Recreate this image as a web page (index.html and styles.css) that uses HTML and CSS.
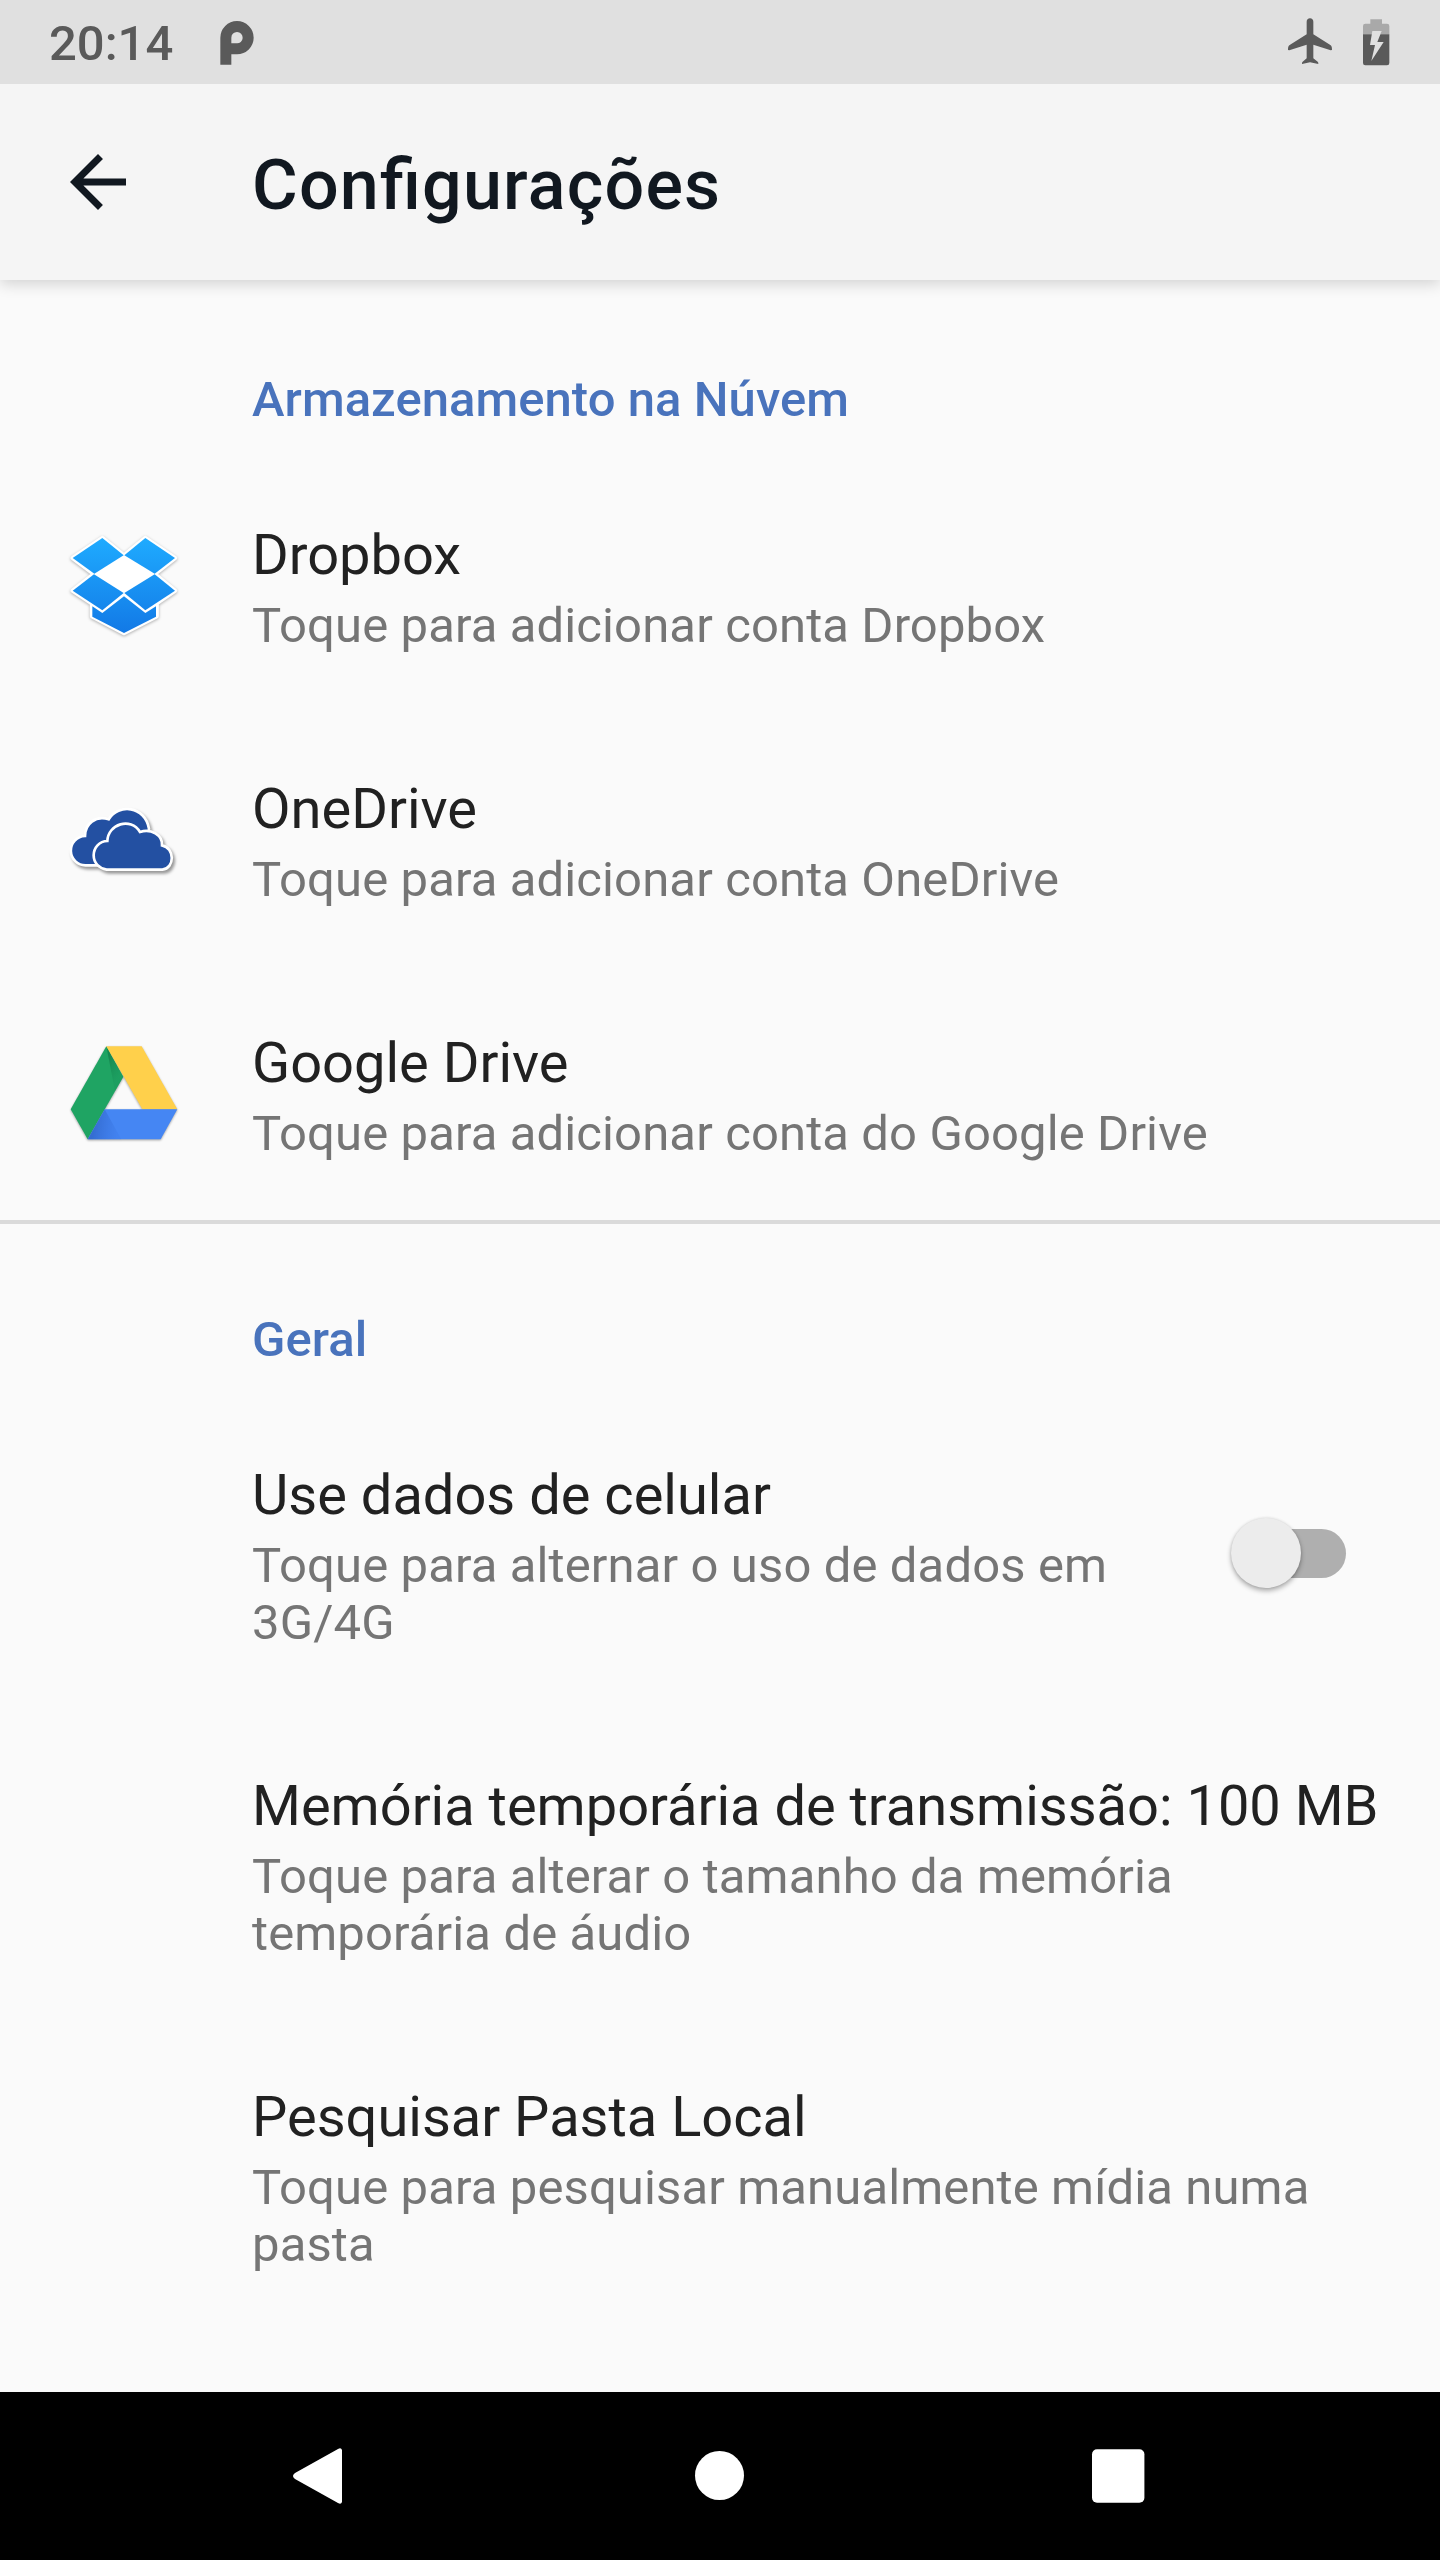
FILE: index.html
```html
<!DOCTYPE html>
<html lang="pt">
<head>
<meta charset="utf-8">
<title>Configurações</title>
<link rel="stylesheet" href="styles.css">
</head>
<body>
<div class="screen">
  <div class="status-bar">
    <span class="clock">20:14</span>
    <svg class="carrier-icon" viewBox="0 0 102 132"><path fill-rule="evenodd" d="M1 131V50a50 50 0 1 1 50 50H34v31zM34 67h16a17 17 0 1 0-16-17z"/></svg>
    <svg class="system-icons" viewBox="0 0 324 150">
      <path d="M66 4c6 0 10 4 10 10v38l51 32c4 3 5 6 5 15l-4 1-52-17v41l13 10c2 2 2 4 2 7l-25-5-24 5c0-3 0-5 2-7l12-10V83L4 100l-4-1c0-9 1-12 5-15l51-32V14c0-6 4-10 10-10z"/>
      <path class="battery-empty" d="M247 7h35v13h15q7 0 7 7v25h-79V27q0-7 7-7h15z"/>
      <path d="M225 52h79v86q0 7-7 7h-65q-7 0-7-7z"/>
      <path class="battery-bolt" d="M253 42h28l-13 33h19l-37 57 11-48h-15z"/>
    </svg>
  </div>

  <header class="app-bar">
    <svg class="back-icon" viewBox="0 0 24 24"><path d="M20 11H7.83l5.59-5.59L12 4l-8 8 8 8 1.41-1.41L7.83 13H20z"/></svg>
    <h1 class="app-title">Configurações</h1>
  </header>

  <main class="content">
    <section class="group">
      <h2 class="group-title">Armazenamento na Núvem</h2>
      <div class="row">
        <div class="row-icon">
          <svg class="service-icon" viewBox="0 0 390 390">
            <defs>
              <linearGradient id="boxBlue" gradientUnits="userSpaceOnUse" x1="0" y1="54" x2="0" y2="340"><stop offset="0" stop-color="#1fabff"/><stop offset="1" stop-color="#1279e6"/></linearGradient>
            </defs>
            <g class="icon-shadow">
              <path fill="#fff" stroke="#fff" stroke-width="13" stroke-linejoin="round" d="M127 54l65 52 64-52 89 60-61 48 61 50-55 38v39l-98 50-96-50v-39l-58-38 64-50-64-48z"/>
            </g>
            <g fill="url(#boxBlue)">
              <path d="M127 54l64 52-88 55-65-47z"/>
              <path d="M256 54l89 60-61 47-91-55z"/>
              <path d="M102 163l89 56-64 52-89-59z"/>
              <path d="M284 163l61 49-89 59-63-52z"/>
              <path d="M192 229l64 50 32-20v31l-96 49-95-49v-31l30 20z"/>
            </g>
          </svg>
        </div>
        <div class="row-text">
          <div class="row-title">Dropbox</div>
          <div class="row-summary">Toque para adicionar conta Dropbox</div>
        </div>
      </div>
      <div class="row">
        <div class="row-icon">
          <svg class="service-icon" viewBox="0 -48 390 390">
            <g class="cloud-shadow" fill="#2350a2" stroke="#fff" stroke-width="8">
              <path d="M78 226a42 42 0 0 1-3-88c0-35 31-63 71-50 29-48 109-41 121 28l-20 110z"/>
              <path d="M140 239c-23-4-39-20-39-43s17-43 41-43c2-51 70-73 98-27 33-11 68 9 66 40 39 7 39 69 1 73z"/>
            </g>
          </svg>
        </div>
        <div class="row-text">
          <div class="row-title">OneDrive</div>
          <div class="row-summary">Toque para adicionar conta OneDrive</div>
        </div>
      </div>
      <div class="row">
        <div class="row-icon">
          <svg class="service-icon" viewBox="0 -6 390 390">
            <defs>
              <linearGradient id="greenFold" gradientUnits="userSpaceOnUse" x1="140" y1="90" x2="188" y2="120"><stop offset="0" stop-color="#0c6b3d" stop-opacity=".5"/><stop offset="1" stop-color="#17935a" stop-opacity=".3"/></linearGradient>
              <linearGradient id="blueFold" gradientUnits="userSpaceOnUse" x1="100" y1="290" x2="175" y2="300"><stop offset="0" stop-color="#2b5fc0" stop-opacity=".65"/><stop offset="1" stop-color="#3b78e7" stop-opacity=".3"/></linearGradient>
            </defs>
            <g class="drive-shadow">
              <path fill="#1fa463" d="M139 49l51 91L83 328l-51-90z"/>
              <path fill="url(#greenFold)" d="M139 49l51 91-25 44z"/>
              <path fill="#ffd04b" d="M139 49h106l107 189H247z"/>
              <path fill="#4586f3" d="M134 238h218l-50 90H83z"/>
              <path fill="url(#blueFold)" d="M134 238l50 90H83z"/>
            </g>
          </svg>
        </div>
        <div class="row-text">
          <div class="row-title">Google Drive</div>
          <div class="row-summary">Toque para adicionar conta do Google Drive</div>
        </div>
      </div>
    </section>

    <section class="group divided">
      <h2 class="group-title">Geral</h2>
      <div class="row">
        <div class="row-icon"></div>
        <div class="row-text">
          <div class="row-title">Use dados de celular</div>
          <div class="row-summary">Toque para alternar o uso de dados em 3G/4G</div>
        </div>
        <div class="switch"><span class="switch-thumb"></span></div>
      </div>
      <div class="row">
        <div class="row-icon"></div>
        <div class="row-text">
          <div class="row-title">Memória temporária de transmissão: 100 MB</div>
          <div class="row-summary">Toque para alterar o tamanho da memória temporária de áudio</div>
        </div>
      </div>
      <div class="row">
        <div class="row-icon"></div>
        <div class="row-text">
          <div class="row-title">Pesquisar Pasta Local</div>
          <div class="row-summary">Toque para pesquisar manualmente mídia numa pasta</div>
        </div>
      </div>
    </section>
  </main>

  <nav class="nav-bar">
    <svg class="nav-icon" viewBox="0 0 60 60"><path d="M52 4v52q-1 3-4 1L5 33q-4-3 0-6L48 3q3-2 4 1z"/></svg>
    <svg class="nav-icon" viewBox="0 0 60 60"><circle cx="30.5" cy="29.5" r="24.5"/></svg>
    <svg class="nav-icon" viewBox="0 0 60 60"><rect x="4" y="3.3" width="52.4" height="53.4" rx="5"/></svg>
  </nav>
</div>
</body>
</html>
```
FILE: styles.css
```css
* {
  box-sizing: border-box;
}

body {
  margin: 0;
  background: #fafafa;
  font-family: Roboto, "Liberation Sans", sans-serif;
}

h1,
h2 {
  margin: 0;
  font-weight: 500;
}

svg {
  display: block;
  flex: none;
}

.screen {
  display: flex;
  flex-direction: column;
  width: 1440px;
  height: 2560px;
  overflow: hidden;
}

.status-bar {
  display: flex;
  flex: none;
  align-items: flex-start;
  height: 84px;
  padding: 0 44px 0 49px;
  background: #e0e0e0;
  color: #5a5a5a;
  fill: #5a5a5a;
}

.clock {
  width: 171px;
  font-size: 49px;
  font-weight: 500;
  line-height: 88px;
}

.carrier-icon {
  width: 34px;
  height: 44px;
  margin-top: 21px;
}

.system-icons {
  width: 108px;
  height: 50px;
  margin: 17px 0 0 auto;
}

.battery-empty {
  fill: #a9a9a9;
}

.battery-bolt {
  fill: #e0e0e0;
}

.app-bar {
  display: flex;
  flex: none;
  align-items: center;
  height: 196px;
  padding-left: 56px;
  background: #f5f5f5;
  box-shadow: 0 4px 14px rgba(0, 0, 0, 0.16);
  clip-path: inset(0 0 -30px 0);
}

.back-icon {
  width: 84px;
  height: 84px;
  fill: #111820;
}

.app-title {
  margin: 5px 0 0 112px;
  color: #111820;
  font-size: 70px;
  line-height: 82px;
  letter-spacing: 1.2px;
  font-feature-settings: "liga" 1;
}

.content {
  flex: 1;
}

.group-title {
  height: 178px;
  padding: 91px 0 0 252px;
  color: #4973bc;
  font-size: 49px;
  line-height: 57px;
  letter-spacing: 0.05px;
}

.divided {
  background: linear-gradient(#dadada, #dadada) top / 100% 4px no-repeat;
}

.row {
  display: flex;
  align-items: center;
  padding-right: 56px;
}

.row-icon {
  flex: none;
  width: 252px;
  padding-left: 60px;
}

.service-icon {
  width: 130px;
  height: 130px;
}

.icon-shadow {
  filter: drop-shadow(0 3px 4px rgba(0, 0, 0, 0.3));
}

.cloud-shadow {
  filter: drop-shadow(6px 8px 5px rgba(0, 0, 0, 0.4));
}

.drive-shadow {
  filter: drop-shadow(0 3px 3px rgba(0, 0, 0, 0.35));
}

.row-text {
  flex: 1;
  padding: 64px 0 58px;
}

.row-title {
  margin-bottom: 9px;
  color: #212121;
  font-size: 56px;
  line-height: 66px;
  white-space: nowrap;
}

.row-summary {
  color: #757575;
  font-size: 49px;
  line-height: 57px;
  letter-spacing: 0.12px;
}

.switch {
  flex: none;
  width: 105px;
  height: 49px;
  margin: 0 38px 0 0;
  border-radius: 25px;
  background: #afafaf;
}

.switch-thumb {
  display: block;
  width: 70px;
  height: 70px;
  margin: -11px 0 0 -10px;
  border-radius: 50%;
  background: #ececec;
  box-shadow: 0 3px 5px rgba(0, 0, 0, 0.3), 0 0 3px rgba(0, 0, 0, 0.12);
}

.nav-bar {
  display: flex;
  flex: none;
  align-items: center;
  justify-content: space-between;
  height: 168px;
  padding: 0 292px 0 290px;
  background: #000;
  fill: #fff;
}

.nav-icon {
  width: 60px;
  height: 60px;
}
```
